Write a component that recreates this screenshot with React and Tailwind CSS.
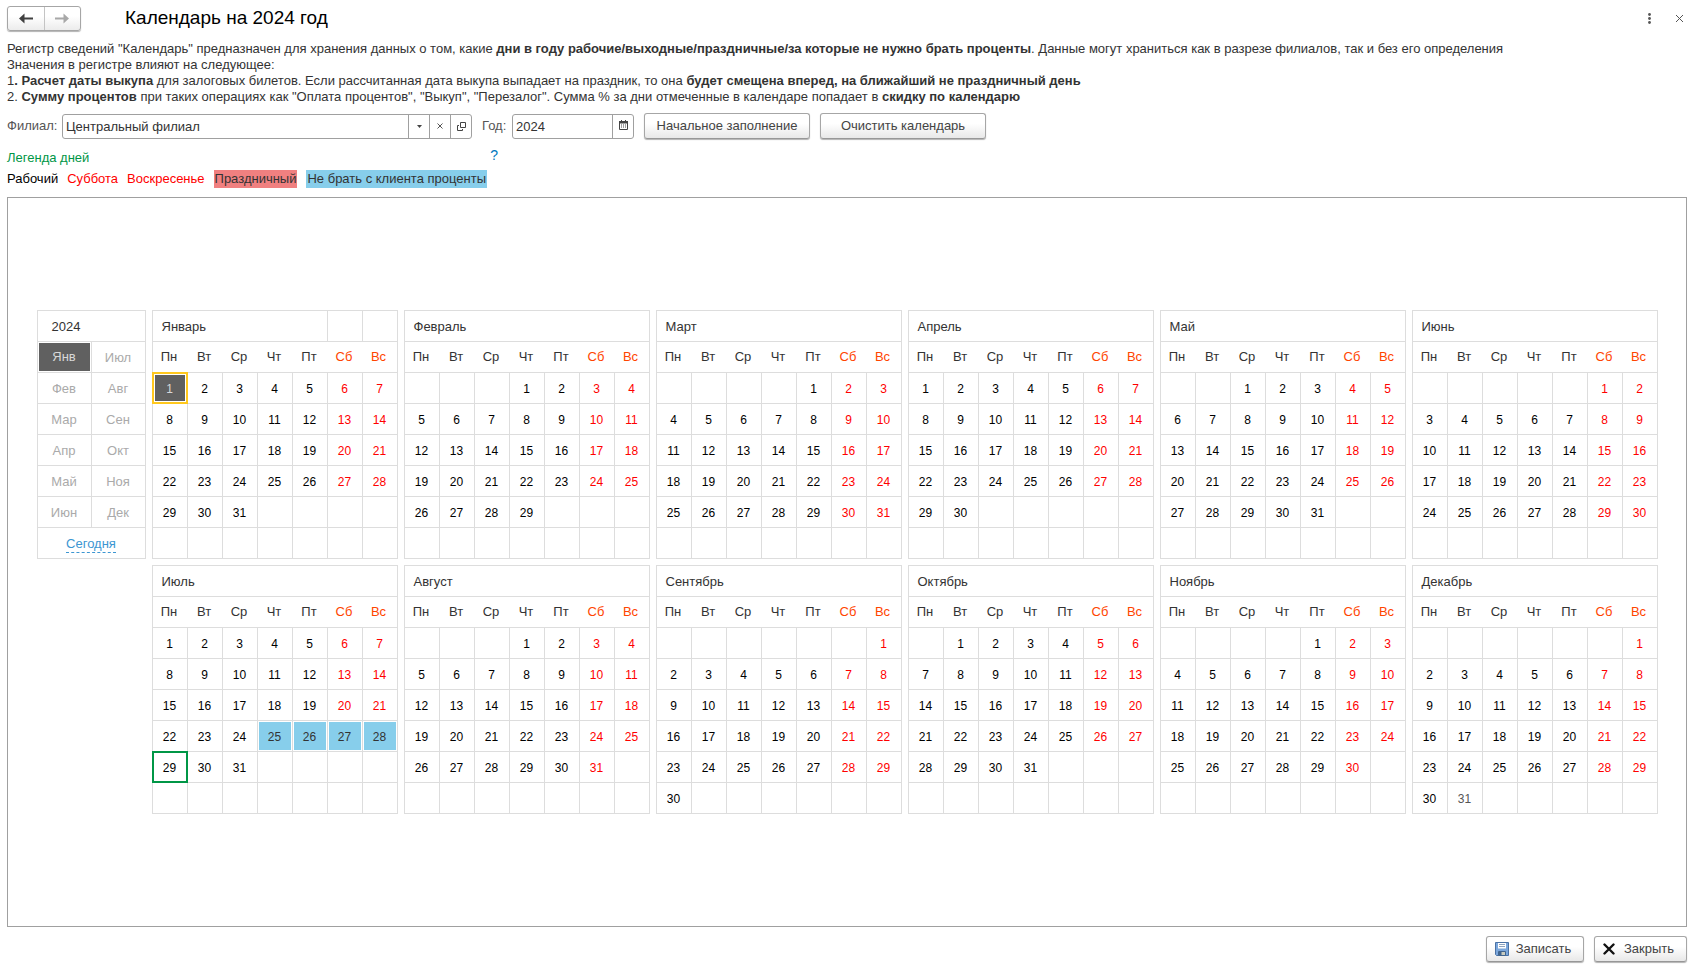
import React, { useState } from "react";

const MONTHS = ["Январь", "Февраль", "Март", "Апрель", "Май", "Июнь", "Июль", "Август", "Сентябрь", "Октябрь", "Ноябрь", "Декабрь"];
const SHORT = ["Янв", "Фев", "Мар", "Апр", "Май", "Июн", "Июл", "Авг", "Сен", "Окт", "Ноя", "Дек"];
const WEEKDAYS = ["Пн", "Вт", "Ср", "Чт", "Пт", "Сб", "Вс"];
const YEAR = 2024;
const NO_INTEREST = new Set(["6-25", "6-26", "6-27", "6-28"]);
const TODAY = "6-29";

function buildWeeks(month) {
  const offset = (new Date(YEAR, month, 1).getDay() + 6) % 7;
  const count = new Date(YEAR, month + 1, 0).getDate();
  return Array.from({ length: 6 }, (_, w) =>
    Array.from({ length: 7 }, (_, d) => {
      const n = w * 7 + d - offset + 1;
      return n >= 1 && n <= count ? n : null;
    })
  );
}

function Day({ month, day, weekend, selected, onSelect }) {
  const key = month + "-" + day;
  let look = weekend ? "text-[#ff0000]" : "text-black";
  if (NO_INTEREST.has(key)) look = "bg-[#87ceeb] text-[#333333]";
  if (key === "11-31") look = "text-[#555555]";
  if (selected) look = "bg-[#606060] text-[#d8d8d8]";
  return (
    <td className="relative border-r border-b border-[#dddddd] p-px">
      {day && (
        <button type="button" onClick={() => onSelect(key)} className={"block h-7 w-full pt-0.5 text-center text-[12px] leading-[26px] " + look}>
          {day}
        </button>
      )}
      {selected && (
        <span className="pointer-events-none absolute -inset-px border-2 border-[#ffc81e]">
          <span className="block h-full border border-white" />
        </span>
      )}
      {key === TODAY && !selected && <span className="pointer-events-none absolute -inset-px border-2 border-[#009646]" />}
    </td>
  );
}

function Month({ month, selected, onSelect }) {
  const active = Number(selected.split("-")[0]) === month;
  return (
    <table className="w-[246px] table-fixed border-separate border-spacing-0 border-t border-l border-[#dddddd]">
      <thead>
        <tr className="h-[31px]">
          <th colSpan={active ? 5 : 7} className="border-r border-b border-[#dddddd] p-0 pt-0.5 pl-[9px] text-left font-normal">
            {MONTHS[month]}
          </th>
          {active && <td className="border-r border-b border-[#dddddd]" />}
          {active && <td className="border-r border-b border-[#dddddd]" />}
        </tr>
        <tr className="h-[31px]">
          {WEEKDAYS.map((d, i) => (
            <th key={d} scope="col" className={"border-b border-[#dddddd] p-0 pr-0.5 text-center font-normal last:border-r " + (i > 4 ? "text-[#ff4500]" : "")}>
              {d}
            </th>
          ))}
        </tr>
      </thead>
      <tbody>
        {buildWeeks(month).map((week, w) => (
          <tr key={w} className="h-[31px]">
            {week.map((day, d) => (
              <Day key={d} month={month} day={day} weekend={d > 4} selected={day !== null && selected === month + "-" + day} onSelect={onSelect} />
            ))}
          </tr>
        ))}
      </tbody>
    </table>
  );
}

function YearNav({ selected, onSelect }) {
  const current = Number(selected.split("-")[0]);
  return (
    <table className="w-[109px] table-fixed border-separate border-spacing-0 border-t border-l border-[#dddddd]">
      <tbody>
        <tr className="h-[31px]">
          <th colSpan={2} className="border-r border-b border-[#dddddd] p-0 pt-0.5 pl-[14px] text-left font-normal">
            {YEAR}
          </th>
        </tr>
        {[0, 1, 2, 3, 4, 5].map((r) => (
          <tr key={r} className="h-[31px]">
            {[r, r + 6].map((m) => (
              <td key={m} className="border-r border-b border-[#dddddd] p-px">
                <button
                  type="button"
                  onClick={() => onSelect(m + "-1")}
                  className={"block h-7 w-full text-center " + (m === current ? "bg-[#606060] leading-7 text-[#d8d8d8]" : "pt-0.5 leading-[26px] text-[#aaaaaa]")}
                >
                  {SHORT[m]}
                </button>
              </td>
            ))}
          </tr>
        ))}
        <tr className="h-[31px]">
          <td colSpan={2} className="border-r border-b border-[#dddddd] p-0 pt-0.5 text-center">
            <button type="button" onClick={() => onSelect(TODAY)} className="border-b border-dashed border-[#3c96d2] leading-4 text-[#3c96d2]">
              Сегодня
            </button>
          </td>
        </tr>
      </tbody>
    </table>
  );
}

const BUTTON =
  "flex h-[26px] items-center justify-center rounded-[3px] border border-[#a6a6a6] border-b-[#979797] bg-linear-to-b from-white from-40% to-[#e8e8e8] text-[#444444] shadow-[0_1px_1px_rgba(0,0,0,0.3)]";

function Arrow({ flip }) {
  return (
    <svg width="14" height="11" viewBox="0 0 14 11" aria-hidden="true">
      <path d={flip ? "M0 4.5h8.500V0.500L14 5.500 8.500 10.500V6.500H0z" : "M14 4.500H5.500V0.500L0 5.500l5.500 5V6.500H14z"} fill="currentColor" />
    </svg>
  );
}

export default function App() {
  const [selected, setSelected] = useState("0-1");
  const [branch, setBranch] = useState("Центральный филиал");
  const [year, setYear] = useState("2024");
  return (
    <main className="flex min-h-screen flex-col bg-white pt-[5px] pr-[15px] pb-2 pl-[7px] font-['Liberation_Sans',Arial,sans-serif] text-[13px] leading-4 text-[#333333]">
      <header className="flex h-[26px] items-center">
        <div className="flex h-[25px] w-[74px] rounded-[3px] border border-[#a6a6a6] bg-linear-to-b from-white from-40% to-[#ececec] shadow-[0_1px_1px_rgba(0,0,0,0.3)]">
          <button type="button" aria-label="Назад" className="flex flex-1 items-center justify-center border-r border-[#c4c4c4] text-[#404040]">
            <Arrow />
          </button>
          <button type="button" aria-label="Вперед" className="flex flex-1 items-center justify-center text-[#a8a8a8]">
            <Arrow flip />
          </button>
        </div>
        <h1 className="ml-11 flex-1 text-[19px] leading-6 text-black">Календарь на 2024 год</h1>
        <button type="button" aria-label="Меню" className="flex h-5 w-5 items-center justify-center text-[#555555]">
          <svg width="3" height="11" viewBox="0 0 3 11" fill="currentColor" aria-hidden="true">
            <circle cx="1.5" cy="1.5" r="1.4" />
            <circle cx="1.5" cy="5.5" r="1.4" />
            <circle cx="1.5" cy="9.5" r="1.4" />
          </svg>
        </button>
        <button type="button" aria-label="Закрыть окно" className="-mr-0.5 ml-2.5 flex h-5 w-5 items-center justify-center text-[#555555]">
          <svg width="7" height="7" viewBox="0 0 7 7" stroke="currentColor" aria-hidden="true">
            <path d="M0 0l7 7M7 0l-7 7" />
          </svg>
        </button>
      </header>

      <section className="mt-2.5">
        <p>
          Регистр сведений "Календарь" предназначен для хранения данных о том, какие <b>дни в году рабочие/выходные/праздничные/за которые не нужно брать проценты</b>. Данные могут храниться как в разрезе филиалов, так и без его определения
        </p>
        <p>Значения в регистре влияют на следующее:</p>
        <p>
          1<b>. Расчет даты выкупа</b> для залоговых билетов. Если рассчитанная дата выкупа выпадает на праздник, то она <b>будет смещена вперед, на ближайший не праздничный день</b>
        </p>
        <p>
          2. <b>Сумму процентов</b> при таких операциях как "Оплата процентов", "Выкуп", "Перезалог". Сумма % за дни отмеченные в календаре попадает в <b>скидку по календарю</b>
        </p>
      </section>

      <form className="mt-2 flex items-center" onSubmit={(e) => e.preventDefault()}>
        <label htmlFor="branch" className="w-[55px] text-[#555555]">Филиал:</label>
        <div className="flex h-[25px] w-[410px] rounded-[3px] border border-[#a0a0a0]">
          <input id="branch" value={branch} onChange={(e) => setBranch(e.target.value)} className="min-w-0 flex-1 px-[3px] pt-px outline-none" />
          <button type="button" aria-label="Выбрать" className="flex w-[21px] items-center justify-center border-l border-[#a0a0a0]">
            <svg width="5" height="3" viewBox="0 0 5 3" aria-hidden="true"><path d="M0 0h5L2.500 3z" fill="#444444" /></svg>
          </button>
          <button type="button" aria-label="Очистить" onClick={() => setBranch("")} className="flex w-[21px] items-center justify-center border-l border-[#a0a0a0]">
            <svg width="6" height="6" viewBox="0 0 6 6" stroke="#555555" aria-hidden="true"><path d="M0.500 0.500l5 5M5.500 0.500l-5 5" /></svg>
          </button>
          <button type="button" aria-label="Открыть" className="flex w-[21px] items-center justify-center border-l border-[#a0a0a0]">
            <svg width="9" height="9" viewBox="0 0 9 9" fill="none" stroke="#444444" aria-hidden="true">
              <path d="M3.500 0.500h5v5h-5zM2 3.500H0.500v5h5V7" />
            </svg>
          </button>
        </div>
        <label htmlFor="year" className="ml-2.5 w-[30px] text-[#555555]">Год:</label>
        <div className="flex h-[25px] w-[122px] rounded-[3px] border border-[#a0a0a0]">
          <input id="year" value={year} onChange={(e) => setYear(e.target.value)} className="min-w-0 flex-1 px-[3px] pt-px outline-none" />
          <button type="button" aria-label="Выбрать год" className="flex w-[21px] items-center justify-center border-l border-[#a0a0a0] pb-0.5">
            <svg width="9" height="10" viewBox="0 0 9 10" aria-hidden="true">
              <path d="M0.500 1.500h8v8h-8z" fill="#ffffff" stroke="#444444" />
              <path d="M0 1h9v2.500H0zM2 0h1v2H2zM6 0h1v2H6z" fill="#444444" />
              <path d="M2 4.500h1v1H2zM4 4.500h1v1H4zM6 4.500h1v1H6zM2 6.500h1v1H2zM4 6.500h1v1H4zM6 6.500h1v1H6z" fill="#444444" />
            </svg>
          </button>
        </div>
        <button type="button" className={BUTTON + " ml-2.5 w-[166px]"}>Начальное заполнение</button>
        <button type="button" className={BUTTON + " ml-2.5 w-[166px]"}>Очистить календарь</button>
      </form>

      <div className="mt-2.5 flex h-4 w-[491px] items-start justify-between">
        <h2 className="pt-px text-[#009646]">Легенда дней</h2>
        <button type="button" aria-label="Справка" className="-mt-0.5 text-[14px] text-[#0078be]">?</button>
      </div>
      <ul className="mt-[5px] flex h-[18px] gap-[9px] leading-[18px]">
        <li className="text-black">Рабочий</li>
        <li className="text-[#ff0000]">Суббота</li>
        <li className="text-[#ff0000]">Воскресенье</li>
        <li className="bg-[#f08080] px-px">Праздничный</li>
        <li className="bg-[#87ceeb] px-px">Не брать с клиента проценты</li>
      </ul>

      <section className="mt-[9px] flex flex-1 items-center justify-center border border-[#a0a0a0] p-4">
        <div className="flex items-start gap-1.5">
          <YearNav selected={selected} onSelect={setSelected} />
          <div className="grid grid-cols-6 gap-1.5">
            {MONTHS.map((name, m) => (
              <Month key={name} month={m} selected={selected} onSelect={setSelected} />
            ))}
          </div>
        </div>
      </section>

      <footer className="mt-[9px] flex justify-end gap-2.5">
        <button type="button" className={BUTTON + " w-[98px] gap-[7px] pr-1"}>
          <svg width="14" height="14" viewBox="0 0 14 14" aria-hidden="true">
            <path d="M0.500 0.500h13v13h-12l-1-1z" fill="#7ba7dc" stroke="#4a72a5" />
            <path d="M3 1h8v5.500H3z" fill="#ffffff" />
            <path d="M4 2.500h6M4 4.500h6" stroke="#8fa5c0" />
            <path d="M3.500 9.500h7v4h-7z" fill="#c9ccc0" stroke="#41658f" />
            <path d="M4 10h2.500v3H4z" fill="#41658f" />
          </svg>
          Записать
        </button>
        <button type="button" className={BUTTON + " w-[93px] gap-[9px] pr-1"}>
          <svg width="12" height="12" viewBox="0 0 12 12" stroke="#111111" strokeWidth="2.4" strokeLinecap="round" aria-hidden="true">
            <path d="M1.500 1.500l9 9M10.500 1.500l-9 9" />
          </svg>
          Закрыть
        </button>
      </footer>
    </main>
  );
}
